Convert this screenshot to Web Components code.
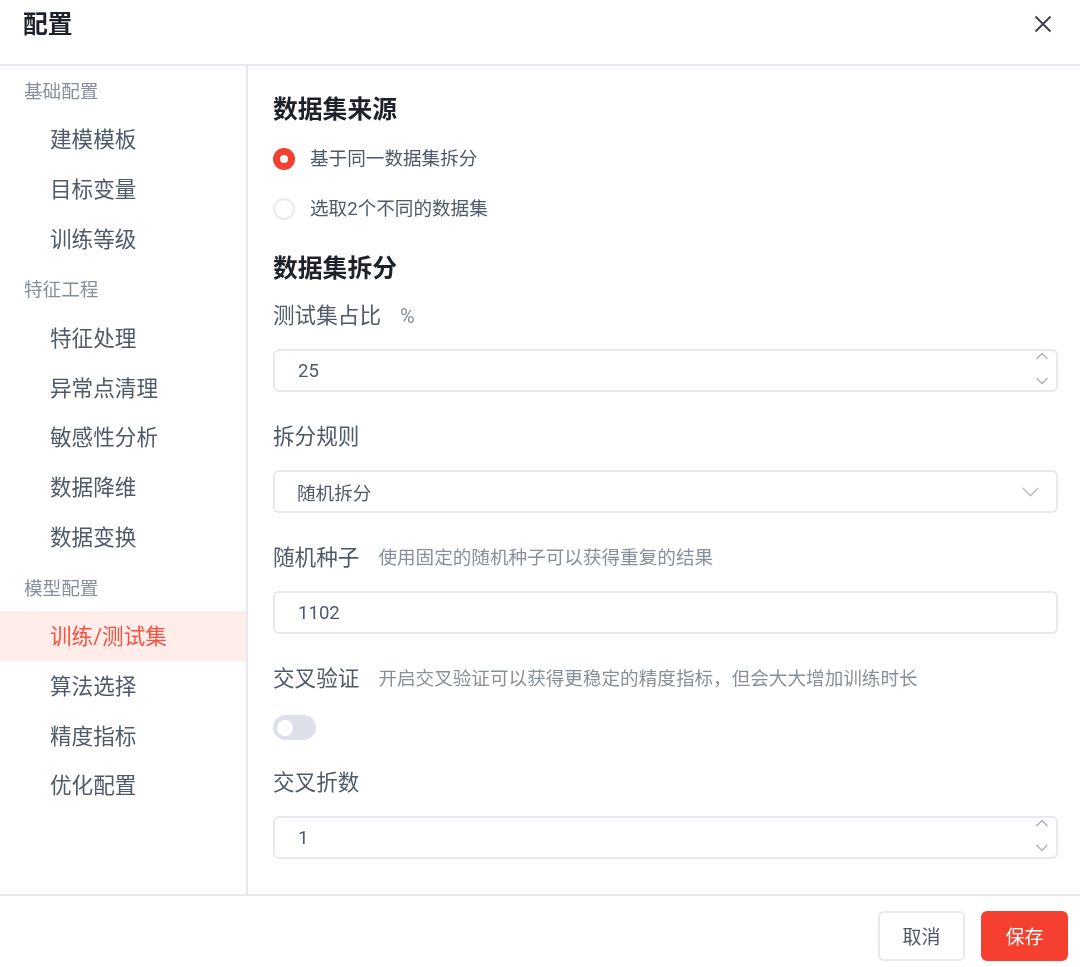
<!DOCTYPE html>
<html lang="zh"><head><meta charset="utf-8"><title>配置</title>
<style>
html,body{margin:0;padding:0;background:#fff;font-family:Roboto,"Noto Sans CJK SC",sans-serif;color:#4e5969}
</style></head><body>
<cfg-dialog>
  <cfg-header slot="header">配置</cfg-header>
  <cfg-nav slot="nav">
    <cfg-nav-label first>基础配置</cfg-nav-label>
    <cfg-nav-item>建模模板</cfg-nav-item>
    <cfg-nav-item>目标变量</cfg-nav-item>
    <cfg-nav-item>训练等级</cfg-nav-item>
    <cfg-nav-label>特征工程</cfg-nav-label>
    <cfg-nav-item>特征处理</cfg-nav-item>
    <cfg-nav-item>异常点清理</cfg-nav-item>
    <cfg-nav-item>敏感性分析</cfg-nav-item>
    <cfg-nav-item>数据降维</cfg-nav-item>
    <cfg-nav-item>数据变换</cfg-nav-item>
    <cfg-nav-label>模型配置</cfg-nav-label>
    <cfg-nav-item active>训练/测试集</cfg-nav-item>
    <cfg-nav-item>算法选择</cfg-nav-item>
    <cfg-nav-item>精度指标</cfg-nav-item>
    <cfg-nav-item>优化配置</cfg-nav-item>
  </cfg-nav>
  <cfg-panel slot="panel">
    <cfg-title>数据集来源</cfg-title>
    <cfg-radio checked>基于同一数据集拆分</cfg-radio>
    <cfg-radio>选取2个不同的数据集</cfg-radio>
    <cfg-title second>数据集拆分</cfg-title>
    <cfg-field label="测试集占比" unit="%"><cfg-input number>25</cfg-input></cfg-field>
    <cfg-field label="拆分规则"><cfg-input select>随机拆分</cfg-input></cfg-field>
    <cfg-field label="随机种子" hint="使用固定的随机种子可以获得重复的结果"><cfg-input>1102</cfg-input></cfg-field>
    <cfg-field label="交叉验证" hint="开启交叉验证可以获得更稳定的精度指标，但会大大增加训练时长" compact><cfg-switch></cfg-switch></cfg-field>
    <cfg-field label="交叉折数"><cfg-input number>1</cfg-input></cfg-field>
  </cfg-panel>
  <cfg-footer slot="footer">
    <cfg-button>取消</cfg-button>
    <cfg-button primary>保存</cfg-button>
  </cfg-footer>
</cfg-dialog>
<script>
function def(name, html){
  customElements.define(name, class extends HTMLElement{
    constructor(){super();this.attachShadow({mode:'open'});}
    connectedCallback(){
      this.shadowRoot.innerHTML = typeof html==='function'?html(this):html;
    }
  });
}
const up='<svg width="14" height="8" viewBox="0 0 14 8" fill="none" stroke="#a9aeb8" stroke-width="1.3"><path d="M1.5 7 7 1.5 12.5 7"/></svg>';
const down='<svg width="14" height="8" viewBox="0 0 14 8" fill="none" stroke="#a9aeb8" stroke-width="1.3"><path d="M1.5 1 7 6.5 12.5 1"/></svg>';
def('cfg-dialog',`<style>
:host{display:flex;flex-direction:column;width:1080px;height:967px;overflow:hidden;background:#fff;filter:blur(.5px)}
.body{flex:none;height:828px;display:flex;border-bottom:2px solid #e8e9ee}
</style>
<slot name="header"></slot>
<div class="body"><slot name="nav"></slot><slot name="panel"></slot></div>
<slot name="footer"></slot>`);
def('cfg-header',`<style>
:host{flex:none;box-sizing:border-box;height:66px;display:flex;align-items:center;justify-content:space-between;padding:0 28px 18px 23px;border-bottom:2px solid #e8e9ee;font-size:24.8px;font-weight:700;color:#1d2129}
span{position:relative;top:-1px}
svg{display:block;margin-top:2px}
</style><span><slot></slot></span><svg width="18" height="18" viewBox="0 0 18 18" fill="none" stroke="#3a3f48" stroke-width="1.9"><path d="M1.5 1.5 16.5 16.5M16.5 1.5 1.5 16.5"/></svg>`);
def('cfg-nav',`<style>
:host{flex:none;display:block;width:246px;border-right:2px solid #e8e9ee;height:100%}
</style><slot></slot>`);
def('cfg-nav-label',`<style>
:host{display:flex;align-items:center;box-sizing:border-box;height:49.7px;padding:0 0 0 24px;font-size:18.6px;color:#86909c}
:host([first]){height:48px;padding-bottom:2px}
</style><slot></slot>`);
def('cfg-nav-item',`<style>
:host{display:flex;align-items:center;box-sizing:border-box;height:49.7px;padding:0 0 2px 50px;font-size:21.6px;color:#4e5969}
:host([active]){background:#feede8;color:#f8503f}
</style><slot></slot>`);
def('cfg-panel',`<style>
:host{flex:1;display:block;padding:28px 22px 0 25px;box-sizing:border-box}
</style><slot></slot>`);
def('cfg-title',`<style>
:host{display:block;font-size:24.8px;font-weight:700;line-height:32px;color:#1d2129;margin-bottom:15px}
:host([second]){margin-top:32px;margin-bottom:14px}
</style><slot></slot>`);
def('cfg-radio',`<style>
:host{display:flex;align-items:center;height:30px;font-size:18.6px;color:#4e5969;margin-bottom:20px}
i{flex:none;box-sizing:border-box;width:22px;height:22px;border-radius:50%;border:2px solid #e9eaef;margin:6px 15px 0 0;background:#fff}
:host([checked]) i{border:7.5px solid #f53f2f}
:host(:last-of-type){margin-bottom:0}
</style><i></i><span><slot></slot></span>`);
def('cfg-field',el=>{
  const unit=el.getAttribute('unit'),hint=el.getAttribute('hint');
  return `<style>
:host{display:block;margin-bottom:28px}
:host([compact]){margin-bottom:26px}
.l{display:flex;align-items:center;box-sizing:border-box;height:30px;padding-bottom:2px;margin-bottom:20px;font-size:21.6px;color:#4e5969}
:host([compact]) .l{margin-bottom:23px}
.u{font-size:20px;color:#86909c;margin:5px 0 0 19px}
.h{font-size:18.6px;color:#86909c;margin-left:19px}
</style><div class="l"><span>${el.getAttribute('label')}</span>${unit?`<span class="u">${unit}</span>`:''}${hint?`<span class="h">${hint}</span>`:''}</div><slot></slot>`;
});
def('cfg-input',el=>`<style>
:host{display:flex;align-items:center;justify-content:space-between;box-sizing:border-box;height:43px;border:2px solid #e8e9ee;border-radius:6px;padding:0 7px 0 23px;font-size:18.6px;color:#4e5969;background:#fff}
:host([select]) span{margin-left:-1px}
.n{display:flex;flex-direction:column;justify-content:space-between;height:33px;margin-bottom:4px}
svg{display:block}
.s{margin-right:10px}
</style><span><slot></slot></span>${el.hasAttribute('number')?`<div class="n">${up}${down}</div>`:''}${el.hasAttribute('select')?`<svg class="s" width="17" height="10" viewBox="0 0 17 10" fill="none" stroke="#b6bac3" stroke-width="1.4"><path d="M.8 1 8.5 8.8 16.2 1"/></svg>`:''}`);
def('cfg-switch',`<style>
:host{display:block;width:43px;height:25px;border-radius:13px;background:#dde0e8;position:relative}
i{position:absolute;left:4px;top:4.5px;width:16px;height:16px;border-radius:50%;background:#fff}
</style><i></i>`);
def('cfg-footer',`<style>
:host{flex:1;display:flex;justify-content:flex-end;align-items:flex-start;gap:16px;padding:15px 12px 0 0}
</style><slot></slot>`);
def('cfg-button',`<style>
:host{display:flex;align-items:center;justify-content:center;box-sizing:border-box;width:87px;height:50px;padding-bottom:2px;border:2px solid #e8e9ee;border-radius:6px;font-size:19px;color:#4e5969;background:#fff}
:host([primary]){background:#f53f2f;border-color:#f53f2f;color:#fff}
</style><slot></slot>`);
</script>
</body></html>
